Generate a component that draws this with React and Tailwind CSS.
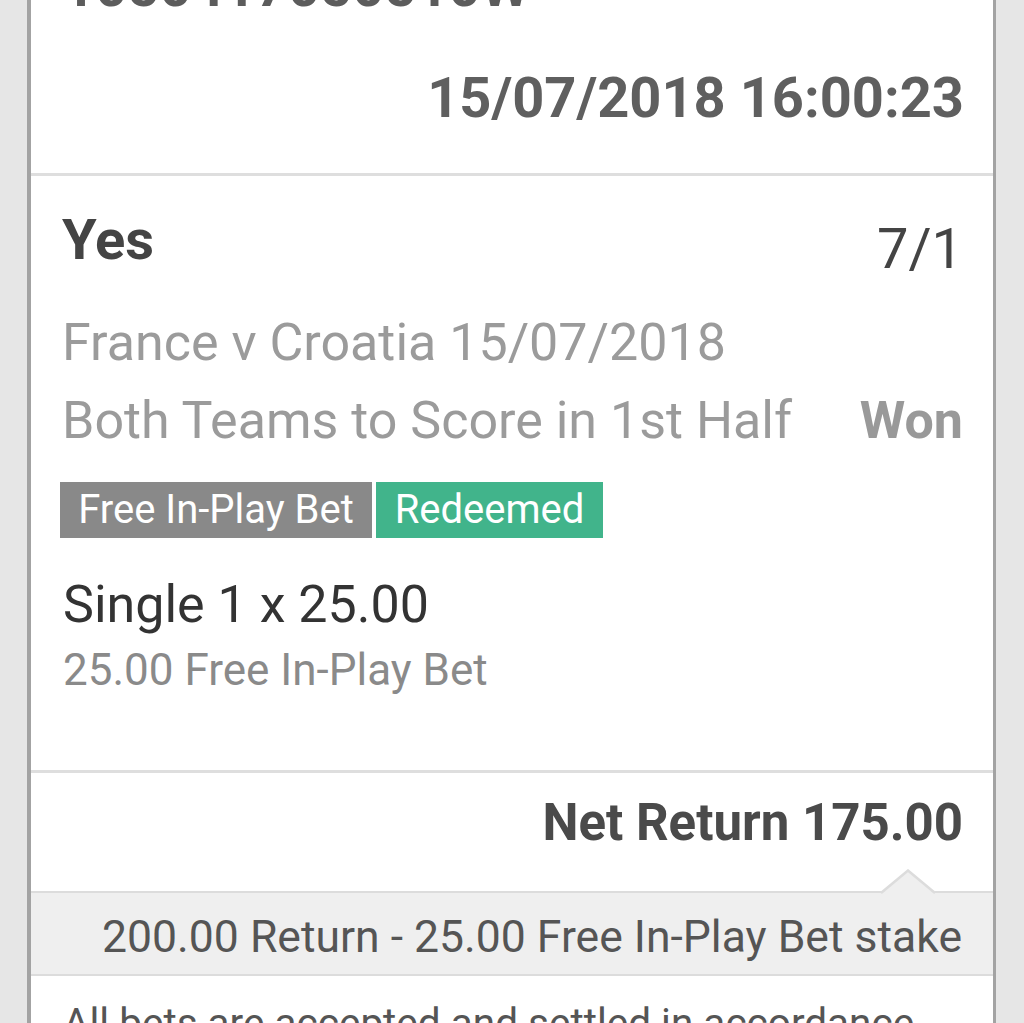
import React from "react";

export default function App() {
  return (
    <div className="min-h-[1023px] h-[1023px] overflow-hidden bg-[#e6e6e6] font-['Roboto',_'Liberation_Sans',_sans-serif]">
      <div className="ml-[27px] mr-[28px] h-[1023px] overflow-hidden border-x-[4px] border-x-[#a3a3a3] border-r-[3px] bg-white">
        {/* Section 1 */}
        <div className="h-[173px] overflow-hidden pl-[32px] pr-[29px]">
          <div className="mt-[-41px] text-[56px] leading-[56px] font-bold text-[#5c5c5c] whitespace-nowrap">
            1050417050510W
          </div>
          <div className="mt-[55px] text-right text-[56px] leading-[56px] font-bold text-[#5f5f5f] whitespace-nowrap">
            15/07/2018 16:00:23
          </div>
        </div>
        <div className="h-[3px] bg-[#dedede]" />

        {/* Section 2 */}
        <div className="h-[594px] pl-[31px] pr-[30px]">
          <div className="flex items-start justify-between pt-[36px]">
            <div className="text-[56px] leading-[56px] font-bold text-[#444]">Yes</div>
            <div className="mt-[9px] text-[56px] leading-[56px] text-[#444]">7/1</div>
          </div>
          <div className="mt-[27px] text-[52px] leading-[78px] text-[#9b9b9b] whitespace-nowrap">
            France v Croatia 15/07/2018
          </div>
          <div className="flex justify-between text-[52px] leading-[78px] text-[#9b9b9b] whitespace-nowrap">
            <span>Both Teams to Score in 1st Half</span>
            <span className="font-bold text-[#999]">Won</span>
          </div>
          <div className="ml-[-2px] mt-[22px] flex h-[56px] gap-[4px] text-[40px] text-white">
            <div className="flex w-[312px] items-center justify-center bg-[#898989]">Free In-Play Bet</div>
            <div className="flex w-[227px] items-center justify-center bg-[#41b48b]">Redeemed</div>
          </div>
          <div className="mt-[41px] pl-[1px] text-[52px] leading-[52px] text-[#333] whitespace-nowrap">Single 1 x 25.00</div>
          <div className="mt-[17px] pl-[1px] text-[44px] leading-[44px] text-[#8a8a8a] whitespace-nowrap">25.00 Free In-Play Bet</div>
        </div>
        <div className="h-[3px] bg-[#dedede]" />

        {/* Section 3 */}
        <div className="pt-[24px]">
          <div className="pr-[30px] text-right text-[51px] leading-[51px] font-bold text-[#4a4a4a] whitespace-nowrap">
            Net Return 175.00
          </div>
          <div className="relative mt-[43px] border-y-[2px] border-[#dcdcdc] bg-[#efefef] pt-[22px] pb-[15px] pr-[31px] text-right text-[44.5px] leading-[44px] text-[#555] whitespace-nowrap">
            <svg
              className="absolute right-[57px] top-[-24px]"
              width="56"
              height="26"
              viewBox="0 0 56 26"
            >
              <polygon points="0,26 28,2 56,26" fill="#efefef" />
              <polyline points="1,24 28,1.5 55,24" fill="none" stroke="#dcdcdc" strokeWidth="2.5" />
            </svg>
            200.00 Return - 25.00 Free In-Play Bet stake
          </div>
          <div className="mt-[27px] pl-[32px] text-[40.5px] leading-[40px] text-[#555] whitespace-nowrap">
            All bets are accepted and settled in accordance
          </div>
        </div>
      </div>
    </div>
  );
}
